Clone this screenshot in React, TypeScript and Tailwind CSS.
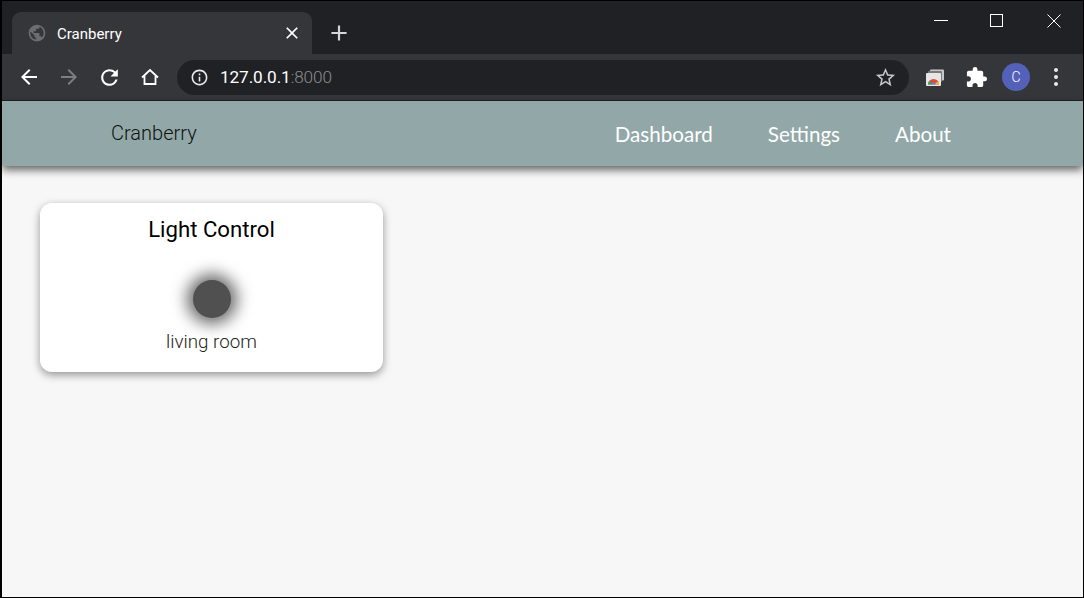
import {
  MdAdd,
  MdArrowBack,
  MdArrowForward,
  MdClose,
  MdExtension,
  MdInfoOutline,
  MdPublic,
  MdRefresh,
  MdStarBorder,
} from 'react-icons/md';

const Toolbar = () => {
  return (
    <div className="h-[46px] bg-[#35363a] flex items-center shrink-0 pl-[15px]">
      <MdArrowBack size={24} className="text-white shrink-0" />
      <MdArrowForward size={24} className="ml-[16px] text-[#7d7e80] shrink-0" />
      <MdRefresh size={25} className="ml-[16px] text-white shrink-0" />
      <svg width="18" height="18" viewBox="0 0 18 18" fill="none" className="ml-[19px] mr-[3px] shrink-0">
        <path d="M1 9.5 L9 2 L17 9.5 M3.5 8 V16 H14.5 V8" stroke="white" strokeWidth="1.8" />
      </svg>
      <div className="ml-[15px] w-[732px] h-[35px] rounded-full bg-[#202124] flex items-center pl-[13px] pr-[12px] shrink-0 font-['Roboto',sans-serif]">
        <MdInfoOutline size={19} className="text-[#e8eaed] shrink-0" />
        <span className="ml-[11px] mt-[2px] text-[17.2px] tracking-[-0.1px] text-white">
          127.0.0.1<span className="text-[#8c8d8f] font-light">:8000</span>
        </span>
        <MdStarBorder size={23} className="ml-auto text-[#c4c6c8]" />
      </div>
      <svg width="20" height="17" viewBox="0 0 20 17" className="ml-[16px] shrink-0">
        <rect x="5" y="0.5" width="14" height="11" rx="1" fill="#c8c8c8" />
        <rect x="3" y="2" width="14" height="11" rx="1" fill="#7a7a7a" />
        <rect x="1" y="4" width="15" height="13" rx="1" fill="#e6e6e6" />
        <path d="M3 15.5 a5.5 5.5 0 0 1 11 0 Z" fill="#e04a3c" />
        <path d="M3 15.5 a5.5 5.5 0 0 1 2 -4 l2 4 Z" fill="#3da35a" />
        <path d="M10 15.5 a2.5 2.5 0 0 1 4 -2 v2 Z" fill="#f2b632" />
        <path d="M6.5 15.5 a2 2 0 0 1 4 0 Z" fill="#4285f4" />
      </svg>
      <MdExtension size={23} className="ml-[20px] text-white shrink-0" />
      <div className="ml-[14px] w-7 h-7 rounded-full bg-[#5361b8] text-white flex items-center justify-center text-[14px] font-['Roboto',sans-serif] font-light shrink-0">
        C
      </div>
      <div className="ml-[24px] flex flex-col gap-[3px] shrink-0">
        <span className="w-[4px] h-[4px] rounded-full bg-[#e8eaed]" />
        <span className="w-[4px] h-[4px] rounded-full bg-[#e8eaed]" />
        <span className="w-[4px] h-[4px] rounded-full bg-[#e8eaed]" />
      </div>
    </div>
  );
};

const TabStrip = () => {
  return (
    <div className="h-[53px] bg-[#202124] flex items-end shrink-0 pl-[10px]">
      <div className="w-[300px] h-[42px] bg-[#35363a] rounded-t-[9px] flex items-center pl-[15px] pr-[10px] shrink-0 font-['Roboto',sans-serif]">
        <MdPublic size={20} className="text-[#6b6d70] shrink-0" />
        <span className="ml-[10px] mt-[2px] text-[15px] text-white">Cranberry</span>
        <MdClose size={20} className="ml-auto text-white" />
      </div>
      <MdAdd size={26} className="ml-[14px] mb-[8px] text-[#d5d6d8] shrink-0" />
      <div className="ml-auto self-start flex items-center h-[39px] text-white">
        <div className="w-[14px] h-px bg-white" />
        <div className="ml-[42px] w-[13px] h-[13px] border border-white" />
        <svg width="14" height="14" viewBox="0 0 14 14" className="ml-[44px] mr-[22px]">
          <path d="M0.5 0.5 L13.5 13.5 M13.5 0.5 L0.5 13.5" stroke="white" strokeWidth="1" />
        </svg>
      </div>
    </div>
  );
};

const App = () => {
  return (
    <div className="w-[1084px] h-[598px] bg-black pl-[2px] pt-px pr-px pb-px overflow-hidden">
      <div className="h-full flex flex-col bg-[#f7f7f7]">
        <TabStrip />
        <Toolbar />
        <div className="h-px bg-[#1f2023] shrink-0" />
        <nav className="h-[65px] bg-[#92a8a8] rounded-b-[3px] flex items-center shadow-[0_4px_8px_rgba(0,0,0,0.6)] shrink-0 pl-[109px] pr-[132px]">
          <span className="mb-[2px] text-[20px] font-light text-[#111] font-['Roboto',sans-serif]">Cranberry</span>
          <div className="ml-auto mt-[2px] flex gap-[55px] text-[20.6px] text-white font-['Lato',sans-serif]">
            <a>Dashboard</a>
            <a>Settings</a>
            <a>About</a>
          </div>
        </nav>
        <main className="flex-1 pl-[38px] pt-[37px]">
          <div className="w-[343px] h-[169px] bg-white rounded-[12px] shadow-[0_3px_8px_rgba(0,0,0,0.4)] flex flex-col items-center font-['Roboto',sans-serif]">
            <h2 className="mt-[12px] text-[22.2px] leading-[28px] text-black">Light Control</h2>
            <div className="mt-[37px] w-[38px] h-[38px] rounded-full bg-[#505050] shadow-[0_0_16px_6px_rgba(0,0,0,0.6)]" />
            <p className="mt-[11px] text-[18.8px] leading-[26px] font-light text-[#222]">living room</p>
          </div>
        </main>
      </div>
    </div>
  );
};

export default App;
